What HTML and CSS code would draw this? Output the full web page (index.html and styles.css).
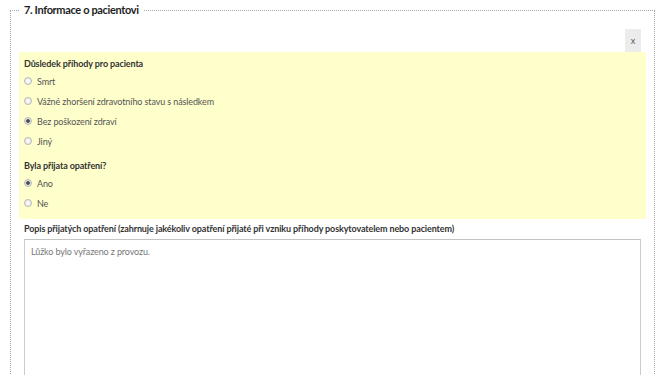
FILE: index.html
```html
<!DOCTYPE html>
<html lang="cs">
<head>
  <meta charset="UTF-8" />
  <title>Informace o pacientovi</title>
  <link rel="stylesheet" href="styles.css">
</head>
<body>
  <fieldset class="section">
    <legend>7. Informace o pacientovi</legend>

    <div class="close-row">
      <button class="close-btn" type="button">x</button>
    </div>

    <!-- Highlighted questions -->
    <div class="question-box">
      <div class="question-title">Důsledek příhody pro pacienta</div>
      <label class="option"><input type="radio" name="dusledek"> Smrt</label>
      <label class="option"><input type="radio" name="dusledek"> Vážné zhoršení zdravotního stavu s následkem</label>
      <label class="option"><input type="radio" name="dusledek" checked> Bez poškození zdraví</label>
      <label class="option"><input type="radio" name="dusledek"> Jiný</label>

      <div class="question-title second">Byla přijata opatření?</div>
      <label class="option"><input type="radio" name="opatreni" checked> Ano</label>
      <label class="option"><input type="radio" name="opatreni"> Ne</label>
    </div>

    <div class="field">
      <label class="field-label" for="popis">Popis přijatých opatření (zahrnuje jakékoliv opatření přijaté při vzniku příhody poskytovatelem nebo pacientem)</label>
      <textarea id="popis">Lůžko bylo vyřazeno z provozu.</textarea>
    </div>
  </fieldset>
</body>
</html>
```

FILE: styles.css
```css
body {
  margin: 0;
  padding: 3px 9px 0 10px;
  background: #fff;
  font-family: Lato, "Open Sans", sans-serif;
  font-size: 9px;
  letter-spacing: -0.12px;
  color: #555;
}

.section {
  margin: 0;
  padding: 0 8px 40px 8px;
  border: 1px dotted #a8a8a0;
}

.section legend {
  margin-left: 1px;
  padding: 0 4px;
  font-size: 11px;
  font-weight: bold;
  letter-spacing: -0.35px;
  color: #1e1e1e;
  line-height: 14px;
}

/* Close button row */
.close-row {
  display: flex;
  justify-content: flex-end;
  padding: 12px 5px 0 0;
}

.close-btn {
  width: 16px;
  height: 23px;
  padding: 0;
  border: none;
  background: #ececec;
  color: #556;
  font-family: Lato, sans-serif;
  font-size: 9px;
  cursor: pointer;
}

/* Yellow question block */
.question-box {
  background: #ffffcc;
  padding: 6px 5px 6px 5px;
}

.question-title {
  font-weight: bold;
  color: #333;
  line-height: 12px;
  margin-bottom: 1px;
}

.question-title.second {
  margin-top: 9px;
  margin-bottom: 1px;
}

.option {
  display: flex;
  align-items: center;
  height: 20px;
  color: #555;
}

.option input {
  appearance: none;
  -webkit-appearance: none;
  width: 8px;
  height: 8px;
  margin: 0 5px 0 0;
  border: 1px solid #b8b8b8;
  border-radius: 50%;
  background: radial-gradient(circle, #fdfdfd 0, #e4e4e4 100%);
}

.option input:checked {
  background: radial-gradient(circle, #444 0, #555 1.5px, #ddd 2.2px, #f4f4f4 100%);
}

/* Description field */
.field {
  padding: 4px 5px 0 5px;
}

.field-label {
  display: block;
  font-weight: bold;
  color: #333;
  line-height: 12px;
  margin-bottom: 4px;
}

.field textarea {
  display: block;
  box-sizing: border-box;
  width: 100%;
  height: 200px;
  padding: 6px 6px;
  border: 1px solid #ccc;
  border-top-color: #c4c4c4;
  font-family: Lato, sans-serif;
  font-size: 9px;
  letter-spacing: -0.12px;
  color: #777;
  resize: none;
}
```
